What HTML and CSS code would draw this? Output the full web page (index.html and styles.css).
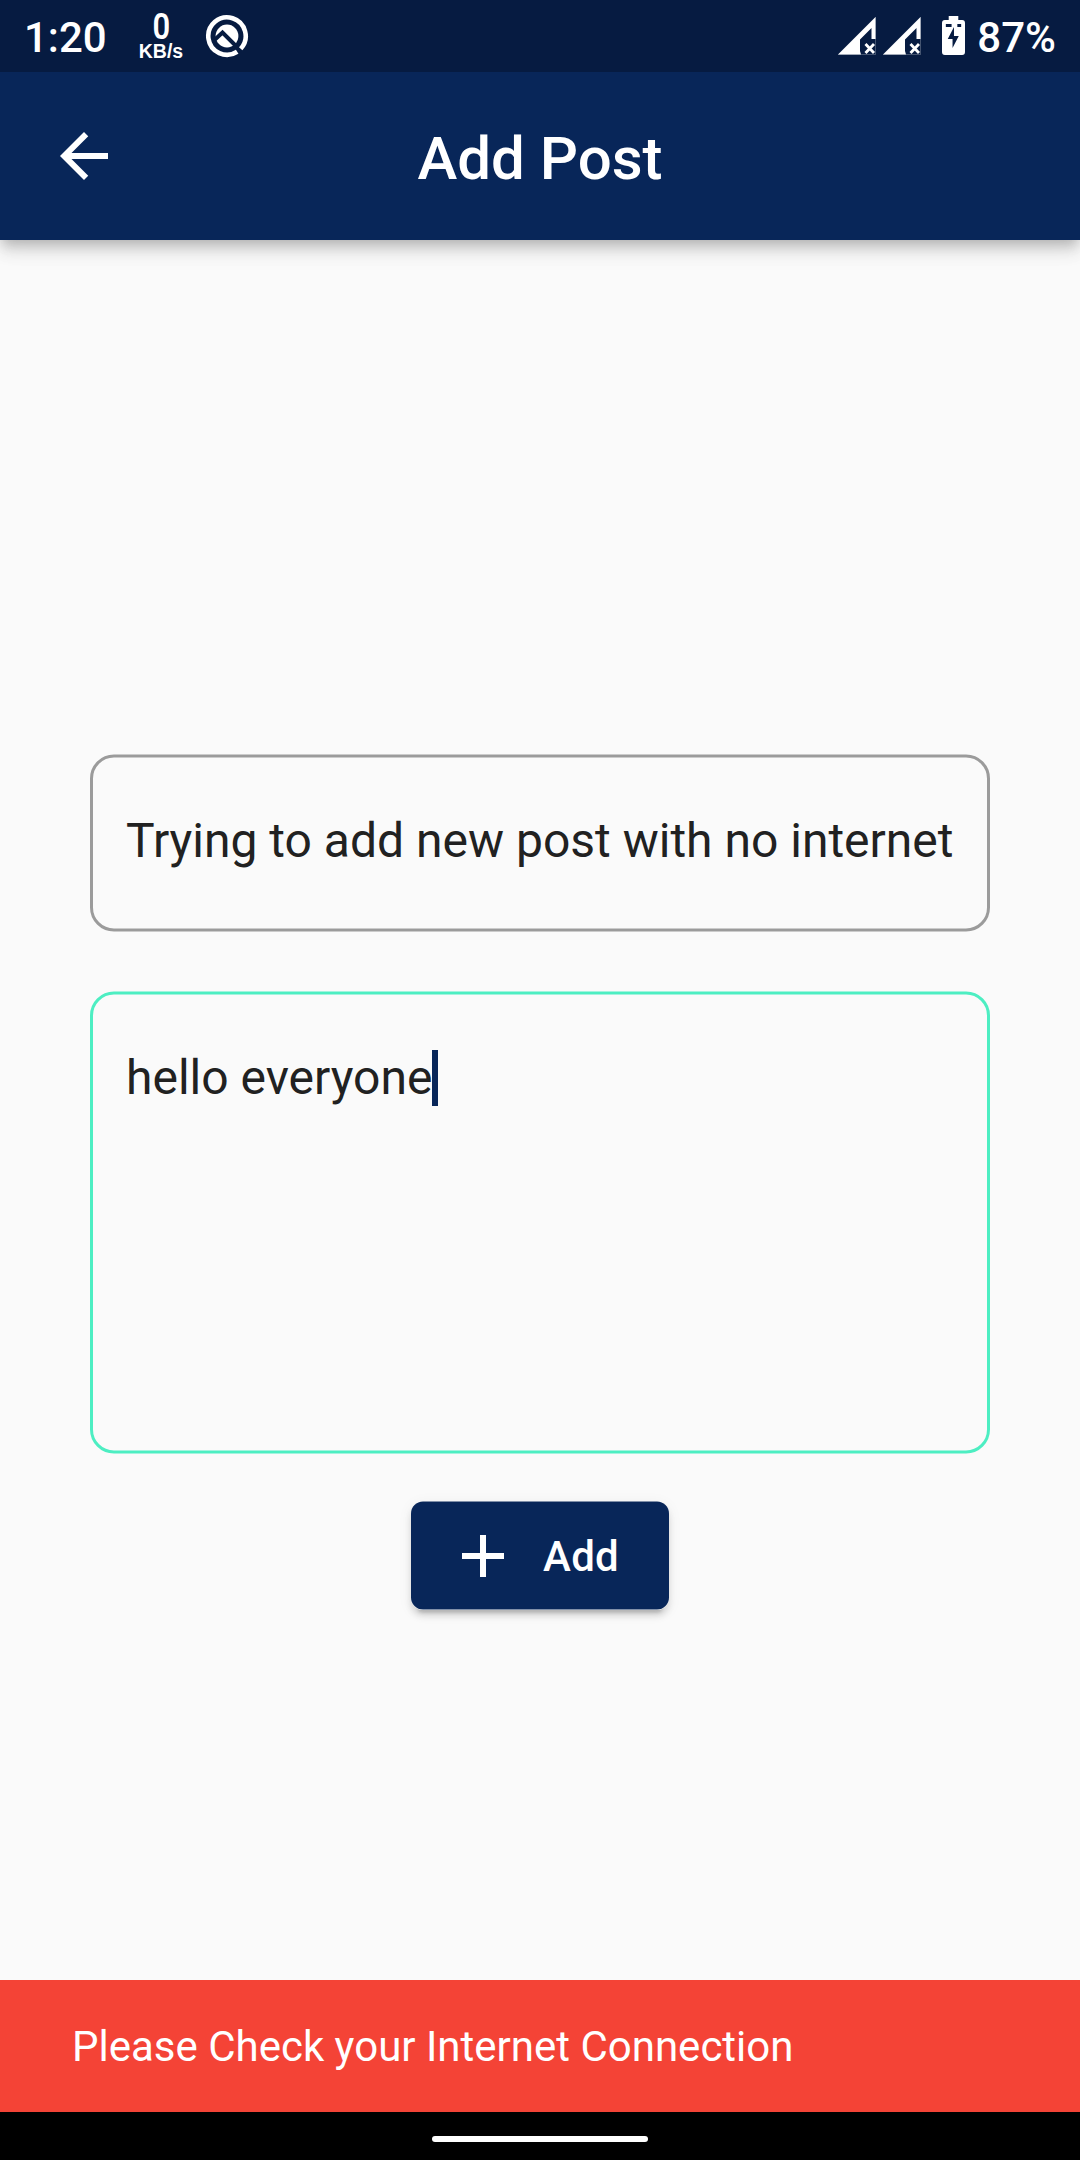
FILE: index.html
```html
<!DOCTYPE html>
<html lang="en">
<head>
<meta charset="utf-8">
<title>Add Post</title>
<link rel="stylesheet" href="styles.css">
</head>
<body>
<div class="screen">
  <div class="status-bar">
    <span class="clock">1:20</span>
    <div class="net-speed"><span class="net-value">0</span><span class="net-unit">KB/s</span></div>
    <svg class="q-icon" width="44" height="44" viewBox="0 0 44 44" fill="none">
      <path d="M32.2 37.700A18.700 18.700 0 1 1 35.700 34.750" stroke="#fff" stroke-width="4.600"/>
      <circle cx="22" cy="22" r="11.400" fill="#fff"/>
      <path d="M10 25.500 17.500 18.500 31 32" stroke="#061b41" stroke-width="4"/>
    </svg>
    <div class="status-right">
      <svg class="signal" width="38" height="38" viewBox="0 0 38 38"><path d="M0 37.500H37.500V0" fill="none" stroke="#fff" stroke-opacity=".25"/><path fill="#fff" d="M0 37.500 37.500 0V22H33.500V11L22 22.500V34L23 37.500Z"/><path d="M27.500 27 36 36M36 27 27.500 36" stroke="#fff" stroke-width="2.800"/></svg>
      <svg class="signal" width="38" height="38" viewBox="0 0 38 38"><path d="M0 37.500H37.500V0" fill="none" stroke="#fff" stroke-opacity=".25"/><path fill="#fff" d="M0 37.500 37.500 0V22H33.500V11L22 22.500V34L23 37.500Z"/><path d="M27.500 27 36 36M36 27 27.500 36" stroke="#fff" stroke-width="2.800"/></svg>
      <svg class="battery" width="23" height="39" viewBox="0 0 24 39" preserveAspectRatio="none"><path fill="#fff" d="M7 0H17V4H21Q24 4 24 7V36Q24 39 21 39H3Q0 39 0 36V7Q0 4 3 4H7Z"/><path fill="#061b41" d="M4 8H10V11H4ZM16 8H20V11H16ZM12.500 11V20H17.500L11 32V23H6Z"/></svg>
      <span class="percent">87%</span>
    </div>
  </div>
  <header class="app-bar">
    <svg class="back" width="72" height="72" viewBox="0 0 24 24" fill="#fff"><path d="M20 11H7.830l5.590-5.590L12 4l-8 8 8 8 1.410-1.410L7.830 13H20v-2z"/></svg>
    <h1 class="title">Add Post</h1>
  </header>
  <main class="content">
    <div class="field field-title">
      <svg class="frame" width="900" height="178"><rect x="1.500" y="2" width="897" height="174" rx="22.500"/></svg>
      <span class="field-text">Trying to add new post with no internet</span>
    </div>
    <div class="field field-body">
      <svg class="frame" width="900" height="463"><rect x="1.500" y="2" width="897" height="459" rx="22.500"/></svg>
      <span class="field-text">hello everyone</span><span class="cursor"></span>
    </div>
    <div class="button">
      <svg class="button-face" width="258" height="109"><rect y="0.500" width="258" height="108" rx="12"/></svg>
      <svg class="plus" width="72" height="72" viewBox="0 0 24 24" fill="#fff"><path d="M19 13h-6v6h-2v-6H5v-2h6V5h2v6h6v2z"/></svg>
      <span class="button-label">Add</span>
    </div>
  </main>
  <div class="snackbar"><span class="snack-text">Please Check your Internet Connection</span></div>
  <div class="nav-bar"><span class="handle"></span></div>
</div>
</body>
</html>
```
FILE: styles.css
```css
* { box-sizing: border-box; }
body { margin: 0; font-family: Roboto, sans-serif; background: #fafafa; }
svg { display: block; flex: none; }
.screen { width: 1080px; height: 2160px; display: flex; flex-direction: column; overflow: hidden; background: #fafafa; }

.status-bar { height: 72px; flex: none; display: flex; align-items: flex-start; background: #061b41; color: #fff; position: relative; z-index: 2; }
.clock { width: 112px; padding-left: 24px; margin-top: 13px; font-size: 42px; line-height: 50px; font-weight: 500; white-space: nowrap; }
.net-speed { width: 48px; margin: 12px 0 0 25px; display: flex; flex-direction: column; align-items: center; }
.net-value { font-size: 36px; line-height: 30px; font-weight: 600; transform: scaleX(.86); }
.net-unit { font: bold 19.5px/19px "Liberation Sans", sans-serif; white-space: nowrap; }
.q-icon { margin: 14px 0 0 20px; }
.status-right { margin-left: auto; display: flex; align-items: flex-start; padding-right: 24px; }
.signal { margin: 17px 7px 0 0; }
.battery { margin: 16px 12px 0 14px; }
.percent { margin-top: 13px; font-size: 42px; line-height: 50px; font-weight: 500; }

.app-bar { height: 168px; flex: none; display: grid; grid-template-columns: 168px 1fr 168px; align-items: center; background: #082659; color: #fff; position: relative; z-index: 1; box-shadow: 0 6px 12px -3px rgba(0,0,0,.2), 0 12px 15px rgba(0,0,0,.1), 0 3px 30px rgba(0,0,0,.06); }
.back { margin: 0 0 0 48px; }
.title { margin: 6px 0 0; font-size: 60px; line-height: 70px; font-weight: 500; text-align: center; }

.content { flex: 1; display: flex; flex-direction: column; align-items: center; padding-top: 514px; }
.field { position: relative; width: 900px; padding-left: 36px; display: flex; align-items: flex-start; color: #212121; }
.field-title { height: 178px; padding-top: 59px; }
.field-body { height: 463px; margin-top: 59px; padding-top: 59px; }
.frame { position: absolute; left: 0; top: 0; fill: none; stroke-width: 3px; }
.field-title .frame { stroke: #9b9b9b; }
.field-body .frame { stroke: #4deec2; }
.field-text { font-size: 48px; line-height: 56px; white-space: nowrap; }
.cursor { width: 6px; height: 56px; background: #082659; }
.button { position: relative; width: 258px; height: 109px; margin-top: 47px; padding-left: 36px; display: flex; align-items: center; gap: 24px; border-radius: 12px; color: #fff; box-shadow: 0 9px 3px -6px rgba(0,0,0,.14), 0 6px 6px rgba(0,0,0,.12), 0 3px 15px rgba(0,0,0,.06); }
.button-face { position: absolute; left: 0; top: 0; fill: #082659; }
.plus, .button-label { position: relative; }
.button-label { padding-top: 2px; font-size: 42px; line-height: 50px; font-weight: 500; letter-spacing: .3px; }

.snackbar { height: 132px; flex: none; display: flex; align-items: center; padding: 2px 0 0 72px; background: #f44336; color: #fff; }
.snack-text { font-size: 42px; line-height: 50px; white-space: nowrap; }
.nav-bar { height: 48px; flex: none; display: flex; justify-content: center; align-items: flex-start; padding-top: 24px; background: #000; }
.handle { width: 216px; height: 6px; border-radius: 3px; background: #fff; }
```
